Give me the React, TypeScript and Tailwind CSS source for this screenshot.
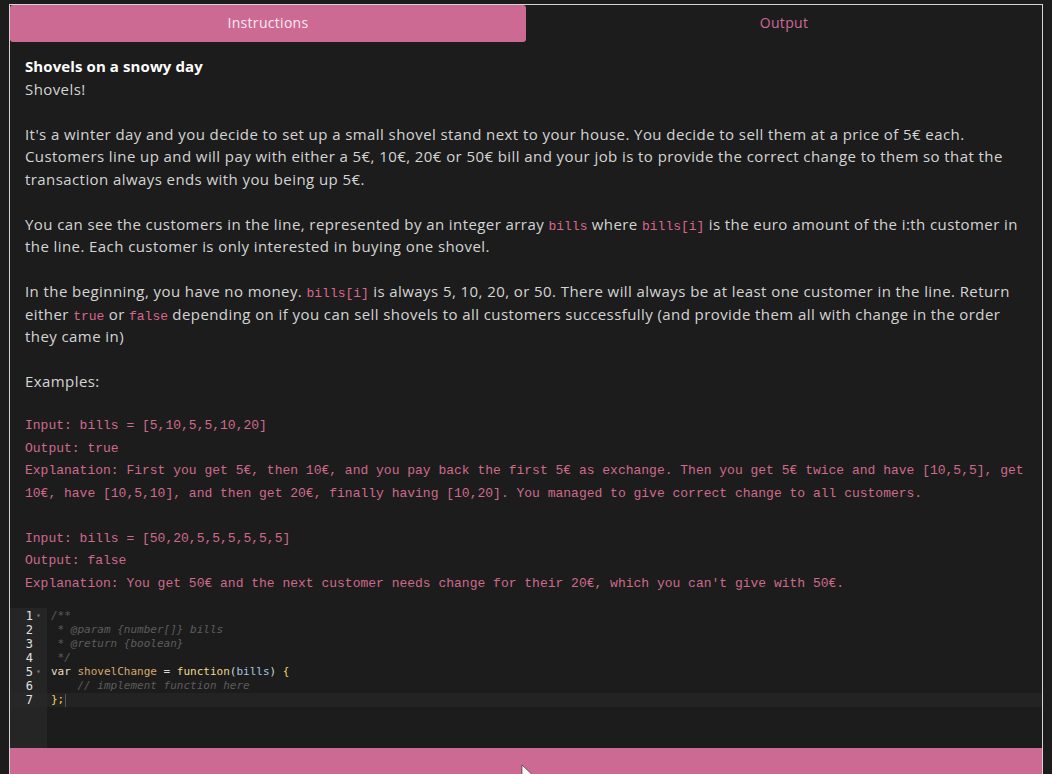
import React from "react";

const C = ({ children }: { children: React.ReactNode }) => (
  <code className="font-['Liberation_Mono',monospace] text-[13px] tracking-normal text-[#d9668f]">{children}</code>
);

const L = ({ children }: { children: React.ReactNode }) => (
  <div className="h-[22.5px] whitespace-nowrap">{children}</div>
);

const Blank = () => <div className="h-[22.5px]" />;

const ex1 = [
  "Input: bills = [5,10,5,5,10,20]",
  "Output: true",
  "Explanation: First you get 5€, then 10€, and you pay back the first 5€ as exchange. Then you get 5€ twice and have [10,5,5], get",
  "10€, have [10,5,10], and then get 20€, finally having [10,20]. You managed to give correct change to all customers.",
];
const ex2 = [
  "Input: bills = [50,20,5,5,5,5,5,5]",
  "Output: false",
  "Explanation: You get 50€ and the next customer needs change for their 20€, which you can't give with 50€.",
];

function Gutter({ n, fold }: { n: number; fold?: boolean }) {
  return (
    <div className={"flex h-[14px] items-center justify-end pr-[3px] " + (n === 7 ? "bg-[#272727]" : "")}>
      <span className="text-[12px] text-[#e0e0e0]">{n}</span>
      <span className="ml-[3px] w-[8px] text-[8px] text-[#777]">{fold ? "▾" : ""}</span>
    </div>
  );
}

export default function App() {
  return (
    <div className="h-[774px] overflow-hidden bg-[#1c1c1c] px-[9px] pt-[4px] font-['Open_Sans',sans-serif]">
      <div className="flex h-[800px] flex-col border border-b-0 border-[#d4d4d4]">
        <div className="grid h-[37px] shrink-0 grid-cols-2">
          <div className="flex items-center justify-center rounded-[3px] bg-[#cc6a93] pb-[2px] text-[14px] tracking-[0.3px] text-[#fbe9f0]">
            Instructions
          </div>
          <div className="flex items-center justify-center pb-[2px] text-[14px] tracking-[0.3px] text-[#d0689a]">Output</div>
        </div>
        <div className="px-[15px] pt-[13px] text-[15px] leading-[22.5px] tracking-[0.42px] text-[#d4d4d4]">
          <L>
            <span className="font-bold tracking-[0.1px] text-white">Shovels on a snowy day</span>
          </L>
          <L>Shovels!</L>
          <Blank />
          <L>
            It's a winter day and you decide to set up a small shovel stand next to your house. You decide to sell them at
            a price of 5€ each.
          </L>
          <L>
            Customers line up and will pay with either a 5€, 10€, 20€ or 50€ bill and your job is to provide the correct
            change to them so that the
          </L>
          <L>transaction always ends with you being up 5€.</L>
          <Blank />
          <L>
            You can see the customers in the line, represented by an integer array <C>bills</C> where <C>bills[i]</C> is
            the euro amount of the i:th customer in
          </L>
          <L>the line. Each customer is only interested in buying one shovel.</L>
          <Blank />
          <L>
            In the beginning, you have no money. <C>bills[i]</C> is always 5, 10, 20, or 50. There will always be at least
            one customer in the line. Return
          </L>
          <L>
            either <C>true</C> or <C>false</C> depending on if you can sell shovels to all customers successfully (and
            provide them all with change in the order
          </L>
          <L>they came in)</L>
          <Blank />
          <L>Examples:</L>
          <Blank />
          <div className="font-['Liberation_Mono',monospace] text-[13px] tracking-normal text-[#cf6a8c]">
            {ex1.map((l, i) => (
              <L key={i}>{l}</L>
            ))}
            <Blank />
            {ex2.map((l, i) => (
              <L key={i}>{l}</L>
            ))}
          </div>
        </div>
        <div className="mt-[13px] flex h-[140px] shrink-0 bg-[#1c1c1c] font-['DejaVu_Sans_Mono',monospace] text-[11px] leading-[14px]">
          <div className="w-[37px] shrink-0 bg-[#252525] pt-[1px]">
            {[1, 2, 3, 4, 5, 6, 7].map((n) => (
              <Gutter key={n} n={n} fold={n === 1 || n === 5} />
            ))}
          </div>
          <div className="flex-1 pt-[1px]">
            <div className="h-[14px] pl-[4px] italic text-[#5c5c5c]">/**</div>
            <div className="h-[14px] pl-[4px] italic text-[#5c5c5c] whitespace-pre"> * @param {"{number[]}"} bills</div>
            <div className="h-[14px] pl-[4px] italic text-[#5c5c5c] whitespace-pre"> * @return {"{boolean}"}</div>
            <div className="h-[14px] pl-[4px] italic text-[#5c5c5c] whitespace-pre"> */</div>
            <div className="h-[14px] pl-[4px] whitespace-pre">
              <span className="text-[#e8dfc0]">var </span>
              <span className="text-[#d7a96e]">shovelChange</span>
              <span className="text-[#d8d8d8]"> = </span>
              <span className="text-[#eed98a]">function</span>
              <span className="text-[#d8d8d8]">(</span>
              <span className="text-[#a6c4e0]">bills</span>
              <span className="text-[#d8d8d8]">) </span>
              <span className="text-[#f0d060]">{"{"}</span>
            </div>
            <div className="h-[14px] pl-[4px] italic text-[#5c5c5c] whitespace-pre">    // implement function here</div>
            <div className="flex h-[14px] items-center bg-[#232323] pl-[4px] whitespace-pre text-[#f0d060]">
              {"};"}
              <span className="ml-[1px] inline-block h-[13px] w-px bg-[#555]" />
            </div>
          </div>
        </div>
        <div className="relative h-[60px] shrink-0 bg-[#cc6a93]">
          <svg className="absolute left-[511px] top-[17px]" width="12" height="16" viewBox="0 0 12 16">
            <path d="M1 0 L1 14 L4.5 10.5 L7 16 L9 15 L6.5 9.5 L11 9.5 Z" fill="white" stroke="#222" strokeWidth="0.6" />
          </svg>
        </div>
      </div>
    </div>
  );
}
